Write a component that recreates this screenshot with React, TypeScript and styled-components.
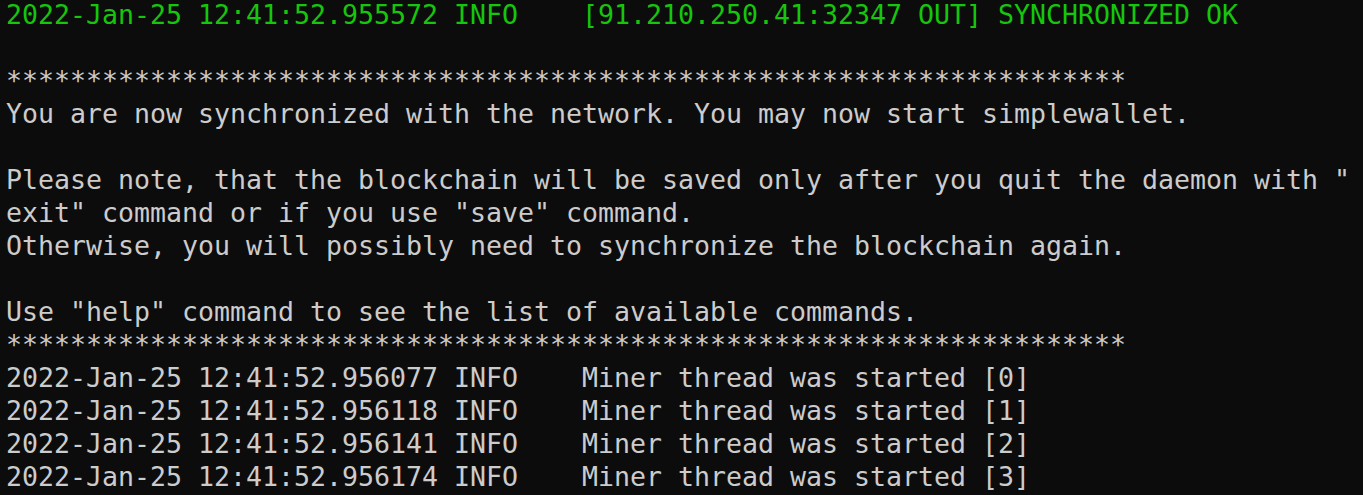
import React from "react";
import styled, { createGlobalStyle } from "styled-components";

const Global = createGlobalStyle`
  html, body { margin: 0; padding: 0; background: #0c0c0c; }
  body { overflow: hidden; }
`;

const Terminal = styled.div`
  width: 1363px;
  height: 495px;
  box-sizing: border-box;
  background: #0c0c0c;
  padding: 0 0 0 6px;
  margin-top: -2px;
  font-family: "DejaVu Sans Mono", "Liberation Mono", monospace;
  font-size: 26.58px;
  line-height: 33px;
  color: #cccccc;
  overflow: hidden;
`;

const Line = styled.div<{ $tone?: "green" | "default" }>`
  white-space: pre;
  height: 33px;
  color: ${(p) => (p.$tone === "green" ? "#16c60c" : "#cccccc")};
`;

const stars = "*".repeat(70);

const lines: { text: string; tone?: "green" | "default" }[] = [
  { text: "2022-Jan-25 12:41:52.955572 INFO    [91.210.250.41:32347 OUT] SYNCHRONIZED OK", tone: "green" },
  { text: "" },
  { text: stars },
  { text: "You are now synchronized with the network. You may now start simplewallet." },
  { text: "" },
  { text: 'Please note, that the blockchain will be saved only after you quit the daemon with "' },
  { text: 'exit" command or if you use "save" command.' },
  { text: "Otherwise, you will possibly need to synchronize the blockchain again." },
  { text: "" },
  { text: 'Use "help" command to see the list of available commands.' },
  { text: stars },
  { text: "2022-Jan-25 12:41:52.956077 INFO    Miner thread was started [0]" },
  { text: "2022-Jan-25 12:41:52.956118 INFO    Miner thread was started [1]" },
  { text: "2022-Jan-25 12:41:52.956141 INFO    Miner thread was started [2]" },
  { text: "2022-Jan-25 12:41:52.956174 INFO    Miner thread was started [3]" },
];

export default function App() {
  return (
    <>
      <Global />
      <Terminal>
        {lines.map((l, i) => (
          <Line key={i} $tone={l.tone}>
            {l.text}
          </Line>
        ))}
      </Terminal>
    </>
  );
}
